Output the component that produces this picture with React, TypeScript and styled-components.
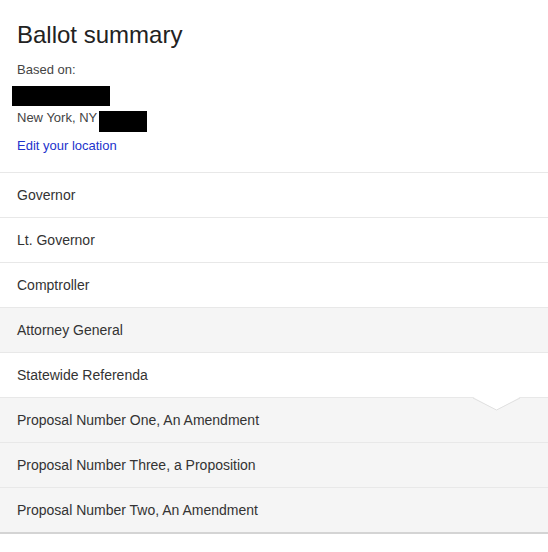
import React from 'react'
import styled, { createGlobalStyle } from 'styled-components'

const GlobalStyle = createGlobalStyle`
  body {
    margin: 0;
    background: #fff;
    font-family: 'Liberation Sans', Arial, sans-serif;
  }
`

const Card = styled.div`
  width: 548px;
  background: #fff;
`

const Header = styled.div`
  padding: 20px 17px 0;
  height: 173px;
  box-sizing: border-box;
  border-bottom: 1px solid #e8e8e8;
`

const Title = styled.h1`
  margin: 0;
  font-size: 24px;
  font-weight: normal;
  line-height: 29px;
  color: #222;
`

const Label = styled.div`
  margin-top: 13px;
  font-size: 13px;
  line-height: 16px;
  color: #444;
`

const Redacted = styled.span<{ $w: number; $h: number }>`
  display: inline-block;
  width: ${({ $w }) => $w}px;
  height: ${({ $h }) => $h}px;
  background: #000;
`

const FirstRedacted = styled(Redacted)`
  display: block;
  margin: 8px 0 0 -5px;
`

const AddressLine = styled.div`
  display: flex;
  align-items: flex-start;
  gap: 2px;
  margin-top: 4px;
  font-size: 13px;
  line-height: 16px;
  color: #444;
  ${Redacted} {
    margin-top: 1px;
  }
`

const EditLink = styled.a`
  display: block;
  margin-top: 6px;
  font-size: 13px;
  line-height: 16px;
  color: #2233cc;
  text-decoration: none;
`

const List = styled.div`
  border-bottom: 2px solid #d4d4d4;
`

const Row = styled.div<{ $shade?: boolean }>`
  position: relative;
  height: 45px;
  box-sizing: border-box;
  display: flex;
  align-items: center;
  padding: 0 17px;
  font-size: 14px;
  color: #333;
  background: ${({ $shade }) => ($shade ? '#f5f5f5' : '#fff')};
  border-bottom: 1px solid #e8e8e8;
  &:last-child {
    height: 44px;
    border-bottom: none;
  }
`

const Notch = styled.svg`
  position: absolute;
  top: -1px;
  left: 473px;
`

const rows = [
  { name: 'Governor' },
  { name: 'Lt. Governor' },
  { name: 'Comptroller' },
  { name: 'Attorney General', shade: true },
  { name: 'Statewide Referenda' },
  { name: 'Proposal Number One, An Amendment', shade: true, notch: true },
  { name: 'Proposal Number Three, a Proposition', shade: true },
  { name: 'Proposal Number Two, An Amendment', shade: true },
]

const App: React.FC = () => (
  <>
    <GlobalStyle />
    <Card>
      <Header>
        <Title>Ballot summary</Title>
        <Label>Based on:</Label>
        <FirstRedacted $w={98} $h={20} />
        <AddressLine>
          <span>New York, NY</span>
          <Redacted $w={48} $h={21} />
        </AddressLine>
        <EditLink href="#">Edit your location</EditLink>
      </Header>
      <List>
        {rows.map((r) => (
          <Row key={r.name} $shade={r.shade}>
            {r.name}
            {r.notch && (
              <Notch width="47" height="14" viewBox="0 0 47 14">
                <polygon points="0,0 47,0 23.5,13" fill="#fff" />
                <polyline points="0,1 23.5,13 47,1" fill="none" stroke="#e0e0e0" strokeWidth="1" />
              </Notch>
            )}
          </Row>
        ))}
      </List>
    </Card>
  </>
)

export default App
